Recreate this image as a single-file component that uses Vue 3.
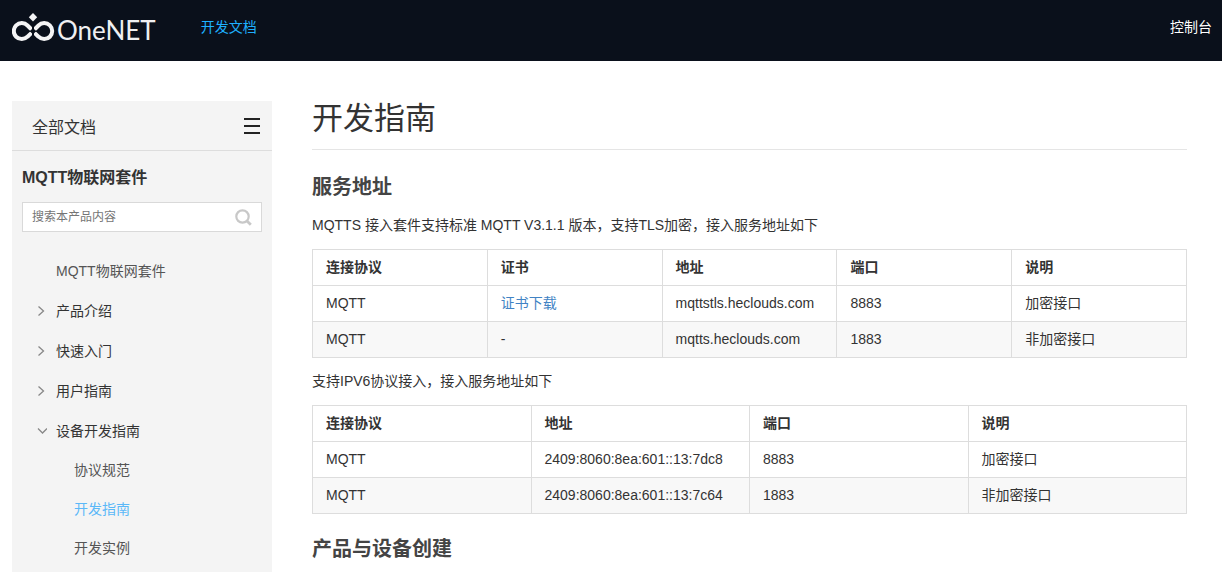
<script setup>
import { ref } from 'vue'

const keyword = ref('')

const sections = [
  { label: '产品介绍', open: false, children: [] },
  { label: '快速入门', open: false, children: [] },
  { label: '用户指南', open: false, children: [] },
  {
    label: '设备开发指南',
    open: true,
    children: [
      { label: '协议规范', active: false },
      { label: '开发指南', active: true },
      { label: '开发实例', active: false }
    ]
  }
]

const serviceRows = [
  { protocol: 'MQTT', cert: '证书下载', host: 'mqttstls.heclouds.com', port: '8883', note: '加密接口' },
  { protocol: 'MQTT', cert: '', host: 'mqtts.heclouds.com', port: '1883', note: '非加密接口' }
]

const ipv6Rows = [
  ['MQTT', '2409:8060:8ea:601::13:7dc8', '8883', '加密接口'],
  ['MQTT', '2409:8060:8ea:601::13:7c64', '1883', '非加密接口']
]
</script>

<template>
  <div class="page">
    <header class="topbar">
      <a class="logo" href="#">
        <svg class="logo-mark" width="43" height="30" viewBox="0 0 43 30" aria-hidden="true">
          <g fill="none" stroke="#f4f4f5" stroke-width="4">
            <path d="M19.500 16.500L15.500 12.500A8 8 0 1 0 15.500 23.700L19.500 19.900" />
            <path d="M22.500 16.500L26.500 12.500A8 8 0 1 1 26.500 23.700L22.500 19.900" />
          </g>
          <path d="M21 13.500v9" stroke="#0a101b" stroke-width="2" />
          <path d="M16 18.200h10" stroke="#0a101b" stroke-width="1" />
          <path d="M21 0l4.200 4.200L21 8.400l-4.200-4.200z" fill="#f4f4f5" />
        </svg>
        <span class="logo-name">OneNET</span>
      </a>
      <nav class="topnav">
        <a class="docs" href="#">开发文档</a>
        <a class="console" href="#">控制台</a>
      </nav>
    </header>

    <div class="body">
      <aside class="sidebar">
        <div class="all-docs">
          <span>全部文档</span>
          <button type="button" class="menu" aria-label="菜单">
            <svg width="16" height="16" viewBox="0 0 16 16" aria-hidden="true">
              <path d="M0 1h16M0 8h16M0 15h16" stroke="#222" stroke-width="2" />
            </svg>
          </button>
        </div>
        <h3 class="product">MQTT物联网套件</h3>
        <form class="search" @submit.prevent>
          <input v-model="keyword" type="text" placeholder="搜索本产品内容" aria-label="搜索本产品内容" />
          <button type="submit" aria-label="搜索">
            <svg width="17" height="17" viewBox="0 0 17 17" aria-hidden="true">
              <g fill="none" stroke="#c8c8c8" stroke-width="2.200">
                <circle cx="7.500" cy="7.500" r="6.200" />
                <path d="M11.500 11.500l4.300 4.300" stroke-width="2.800" />
              </g>
            </svg>
          </button>
        </form>
        <ul class="tree">
          <li><a class="leaf" href="#">MQTT物联网套件</a></li>
          <li v-for="s in sections" :key="s.label">
            <a class="branch" href="#">
              <svg width="10" height="10" viewBox="0 0 10 10" aria-hidden="true">
                <path :d="s.open ? 'M1 2.500l4.500 4.500 4.500-4.500' : 'M1.500 0.500l5 4.500-5 4.500'" fill="none" stroke="#888" stroke-width="1.300" />
              </svg>
              <span>{{ s.label }}</span>
            </a>
            <ul v-if="s.open">
              <li v-for="c in s.children" :key="c.label">
                <a class="leaf nested" :class="{ active: c.active }" href="#">{{ c.label }}</a>
              </li>
            </ul>
          </li>
        </ul>
      </aside>

      <main class="content">
        <h1>开发指南</h1>
        <h2>服务地址</h2>
        <p>MQTTS 接入套件支持标准 MQTT V3.1.1 版本，支持TLS加密，接入服务地址如下</p>
        <table>
          <thead>
            <tr>
              <th>连接协议</th>
              <th>证书</th>
              <th>地址</th>
              <th>端口</th>
              <th>说明</th>
            </tr>
          </thead>
          <tbody>
            <tr v-for="r in serviceRows" :key="r.port">
              <td>{{ r.protocol }}</td>
              <td>
                <a v-if="r.cert" href="#">{{ r.cert }}</a>
                <template v-else>-</template>
              </td>
              <td>{{ r.host }}</td>
              <td>{{ r.port }}</td>
              <td>{{ r.note }}</td>
            </tr>
          </tbody>
        </table>
        <p>支持IPV6协议接入，接入服务地址如下</p>
        <table>
          <thead>
            <tr>
              <th>连接协议</th>
              <th>地址</th>
              <th>端口</th>
              <th>说明</th>
            </tr>
          </thead>
          <tbody>
            <tr v-for="r in ipv6Rows" :key="r[1]">
              <td v-for="cell in r" :key="cell">{{ cell }}</td>
            </tr>
          </tbody>
        </table>
        <h2>产品与设备创建</h2>
      </main>
    </div>
  </div>
</template>

<style>
body {
  margin: 0;
  background: #fff;
}
</style>

<style scoped>
.page {
  display: flex;
  flex-direction: column;
  min-height: 100vh;
  font-family: "Liberation Sans", Arial, "Noto Sans CJK SC", sans-serif;
  font-size: 14px;
  color: #333;
}
a {
  text-decoration: none;
}
button {
  display: flex;
  padding: 0;
  border: 0;
  background: none;
  cursor: pointer;
}
ul {
  margin: 0;
  padding: 0;
  list-style: none;
}

.topbar {
  display: flex;
  height: 61px;
  padding: 0 10px 0 12px;
  background: #0a101b;
}
.logo {
  display: flex;
  align-items: flex-start;
  gap: 2px;
  padding-top: 13px;
}
.logo-name {
  font-family: Lato, sans-serif;
  font-size: 26px;
  line-height: 34px;
  color: #f0f0f2;
}
.topnav {
  display: flex;
  flex: 1;
  justify-content: space-between;
  margin-left: 45px;
  line-height: 54px;
}
.docs {
  color: #1eb0ff;
}
.console {
  color: #fff;
}

.body {
  display: flex;
  flex: 1;
  gap: 40px;
  padding: 40px 35px 0 12px;
}
.sidebar {
  flex: none;
  width: 260px;
  background: #f4f4f4;
}
.all-docs {
  display: flex;
  align-items: center;
  justify-content: space-between;
  height: 49px;
  padding: 0 12px 0 20px;
  border-bottom: 1px solid #ddd;
  font-size: 16px;
}
.product {
  margin: 0 10px;
  padding-top: 2px;
  font-size: 16px;
  line-height: 49px;
}
.search {
  display: flex;
  align-items: center;
  box-sizing: border-box;
  height: 30px;
  margin: 0 10px 20px;
  padding: 0 9px;
  border: 1px solid #d9d9d9;
  background: #fff;
}
.search input {
  flex: 1;
  min-width: 0;
  padding: 0;
  border: 0;
  outline: 0;
  background: none;
  font: inherit;
  font-size: 12px;
  color: #333;
}
.search input::placeholder {
  color: #757575;
}
.leaf {
  display: block;
  padding-left: 44px;
  line-height: 39px;
  color: #555;
}
.nested {
  padding-left: 62px;
}
.leaf.active {
  color: #5bb8f8;
}
.branch {
  display: flex;
  align-items: center;
  gap: 9px;
  padding-left: 25px;
  line-height: 40px;
  color: #333;
}

.content {
  flex: 1;
  min-width: 0;
}
h1 {
  margin: 0 0 20px;
  padding-bottom: 12px;
  border-bottom: 1px solid #e5e5e5;
  font-size: 31px;
  font-weight: 400;
  line-height: 36px;
}
h2 {
  margin: 0 0 9px;
  font-size: 20px;
  line-height: 34px;
  color: #444;
}
p {
  margin: 0 0 12px;
  line-height: 24px;
}
table {
  width: 100%;
  margin-bottom: 11px;
  border-collapse: collapse;
  table-layout: fixed;
}
table + h2 {
  margin-top: 18px;
}
th,
td {
  padding: 6px 13px;
  border: 1px solid #ddd;
  text-align: left;
  line-height: 23px;
}
td a {
  color: #4183c4;
}
tbody tr:nth-child(even) {
  background: #f8f8f8;
}
</style>
